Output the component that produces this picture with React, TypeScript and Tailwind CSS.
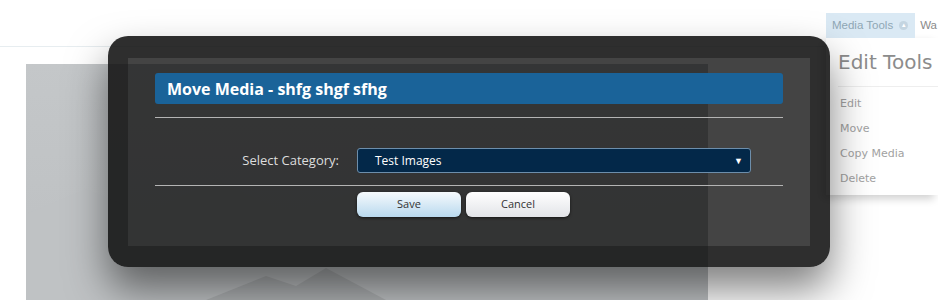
import React from "react";

const menuItems = ["Edit", "Move", "Copy Media", "Delete"];

export default function App() {
  return (
    <div className="relative w-[938px] h-[300px] overflow-hidden bg-white font-['DejaVu_Sans',sans-serif]">
      {/* page behind the dialog */}
      <div className="h-[47px] border-b border-[#e7edf0]" />
      <div className="ml-[26px] mt-[17px] w-[682px] h-[236px] bg-gradient-to-b from-[#c4c7c9] to-[#bcbfc1] overflow-hidden">
        <svg width="682" height="236" viewBox="0 0 682 236">
          <path d="M0 150 L60 125 L120 150 L190 115 L260 150 L330 128 L420 150 L500 118 L600 150 L682 132 L682 236 L0 236 Z" fill="#bfc2c4" />
          <path d="M180 236 L240 212 L270 222 L300 204 L360 236 Z" fill="#aeb1b3" />
        </svg>
      </div>

      {/* media tools menu */}
      <div className="absolute left-[826px] top-[13px] w-[112px]">
        <div className="flex items-center h-[25px]">
          <div className="flex items-center gap-[6px] h-full pl-[6px] pr-[7px] bg-[#dae9f4] whitespace-nowrap font-['Liberation_Sans',sans-serif] text-[11.5px] text-[#8fa7b5]">
            Media Tools
            <span className="flex items-center justify-center w-[9px] h-[9px] rounded-full bg-[#c4d5e1] text-[6px] text-white">▲</span>
          </div>
          <span className="ml-[5px] font-['Liberation_Sans',sans-serif] text-[11.5px] text-[#8a8a8a]">Wa</span>
        </div>
        <div className="h-[157px] bg-white shadow-[-4px_4px_8px_rgba(0,0,0,0.18)] pl-[12px]">
          <div className="pt-[12px] pb-[11px] border-b border-[#eeeeee] text-[20px] leading-[25px] text-[#8c8c8c]">Edit Tools</div>
          <div className="flex flex-col pt-[9px]">
            {menuItems.map((m) => (
              <div key={m} className="h-[25px] pl-[2px] text-[11px] leading-[15px] text-[#a2a2a2]">{m}</div>
            ))}
          </div>
        </div>
      </div>

      {/* modal */}
      <div className="absolute left-[108px] top-[36px] w-[722px] h-[231px] rounded-[20px] border-solid border-x-[20px] border-t-[22px] border-b-[21px] border-[rgba(12,12,12,0.86)] bg-[rgba(0,0,0,0.735)] bg-clip-padding shadow-[0_22px_40px_rgba(0,0,0,0.5)]">
        <div className="px-[27px] pt-[15px]">
          <div className="h-[31px] rounded-[3px] bg-[#1a6399] flex items-center pl-[12px] font-['Open_Sans',sans-serif] font-bold text-[16px] text-white">
            Move Media - shfg shgf sfhg
          </div>
          <div className="mt-[13px] h-px bg-[#b4b4b4]" />
          <div className="flex items-center mt-[30px] h-[25px]">
            <div className="w-[184px] text-right font-['Open_Sans',sans-serif] text-[13px] text-[#dddddd]">Select Category:</div>
            <div className="ml-[18px] w-[394px] h-[25px] rounded-[3px] border border-[#6d8eab] bg-[#032849] flex items-center justify-between pl-[17px] pr-[7px] font-['Open_Sans',sans-serif] text-[12px] text-white">
              <span>Test Images</span>
              <span className="text-[9px]">▼</span>
            </div>
          </div>
          <div className="mt-[12px] h-px bg-[#b4b4b4]" />
          <div className="flex gap-[5px] mt-[6px] ml-[202px]">
            <button className="w-[104px] h-[25px] rounded-[6px] bg-gradient-to-b from-[#f6fafd] to-[#b9d9ee] shadow-[0_1px_3px_rgba(0,0,0,0.6)] font-['Open_Sans',sans-serif] text-[11px] text-[#333]">Save</button>
            <button className="w-[104px] h-[25px] rounded-[6px] bg-gradient-to-b from-[#ffffff] to-[#e2e4e8] shadow-[0_1px_3px_rgba(0,0,0,0.6)] font-['Open_Sans',sans-serif] text-[11px] text-[#333]">Cancel</button>
          </div>
        </div>
      </div>
    </div>
  );
}
